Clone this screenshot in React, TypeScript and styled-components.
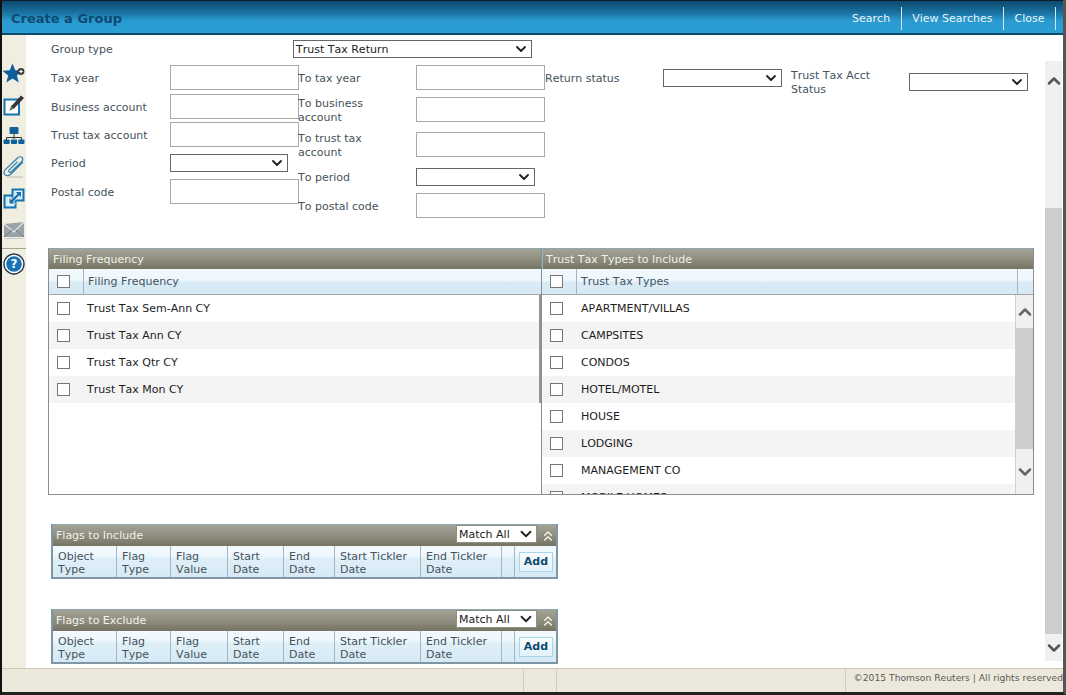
import React from 'react';
import styled, { createGlobalStyle } from 'styled-components';
import { ChevronDown, ChevronUp, ChevronsUp } from 'lucide-react';

const GlobalStyle = createGlobalStyle`
  html, body { margin: 0; padding: 0; background: #fff; }
  body { font-family: "DejaVu Sans", Verdana, sans-serif; font-size: 11px; font-kerning: none; }
  * { box-sizing: border-box; }
`;

const Page = styled.div`
  width: 1066px;
  height: 695px;
  display: flex;
  flex-direction: column;
  overflow: hidden;
  border-left: 2px solid #111;
  border-right: 3px solid #555;
  border-bottom: 3px solid #222;
  background: #fff;
`;

const Header = styled.header`
  height: 35px;
  flex: none;
  display: flex;
  align-items: center;
  padding: 2px 7px 0 9px;
  border-top: 1px solid #0b1c28;
  border-bottom: 2px solid #0d4a6c;
  background: linear-gradient(180deg, #0d4a6f 0%, #1a6f9f 35%, #2a9bd0 62%, #2a9fd4 100%);
`;

const Title = styled.h1`
  margin: 0;
  flex: 1;
  font-size: 13px;
  font-weight: bold;
  color: #0d4a73;
`;

const HeaderLink = styled.a`
  height: 23px;
  display: flex;
  align-items: center;
  padding: 0 10.5px;
  color: #e6f4fb;
  font-size: 11px;
  border-right: 1px solid #cfe8f4;
`;

const Body = styled.div`
  flex: 1;
  min-height: 0;
  display: flex;
`;

const Sidebar = styled.nav`
  width: 24px;
  flex: none;
  display: flex;
  flex-direction: column;
  align-items: center;
  gap: 9px;
  padding-top: 28px;
  background: #efeee0;
`;

const SideDivider = styled.div`
  width: 24px;
  height: 1px;
  margin: -1px 0 -5px;
  background: #a5a595;
`;

const Main = styled.main`
  flex: 1;
  min-width: 0;
  overflow: hidden;
  padding: 4px 0 0 22px;
`;

const GroupRow = styled.div`
  display: flex;
  align-items: center;
  height: 19px;
  padding-left: 3px;
  color: #44535c;
`;

const FormGrid = styled.div`
  display: grid;
  grid-template-columns: 247px 247px 246px 1fr;
  height: 183px;
  margin-top: 7px;
  padding-left: 3px;
`;

const FormColumn = styled.div`
  display: flex;
  flex-direction: column;
`;

const Field = styled.div<{ $top?: number }>`
  display: flex;
  align-items: center;
  margin-top: ${(p) => p.$top ?? 0}px;
`;

const Label = styled.label<{ $width: number }>`
  width: ${(p) => p.$width}px;
  flex: none;
  padding-top: 1px;
  margin-bottom: -1px;
  color: #44535c;
  line-height: 13.5px;
`;

const TextInput = styled.input`
  width: 129px;
  height: 25px;
  flex: none;
  border: 1px solid #a9a9a9;
  background: #fff;
  outline: none;
`;

const SelectBox = styled.div<{ $width: number }>`
  width: ${(p) => p.$width}px;
  height: 18px;
  flex: none;
  display: flex;
  align-items: center;
  justify-content: space-between;
  padding: 1px 2px 0 2px;
  border: 1px solid #666;
  background: #fff;
  color: #222;
  svg { flex: none; margin-top: -1px; }
`;

const TablesRow = styled.section`
  display: flex;
  width: 986px;
  height: 247px;
  border-left: 1px solid #8c8c8c;
  border-right: 1px solid #8c8c8c;
  border-bottom: 1px solid #8c8c8c;
`;

const Panel = styled.div<{ $side: 'left' | 'right' }>`
  width: 492px;
  flex: none;
  display: flex;
  flex-direction: column;
  border-left: ${(p) => (p.$side === 'right' ? '1px solid #8c8c8c' : 'none')};
`;

const BarTitle = styled.div<{ $accent?: boolean }>`
  height: 21px;
  flex: none;
  display: flex;
  align-items: center;
  padding-left: 4px;
  border-top: 1px solid #8ea7b3;
  background: linear-gradient(180deg, #a3a396 0%, #8f8e7f 50%, #757464 100%);
  color: #f1f1e8;
  font-size: 11px;
  ${(p) => (p.$accent ? 'box-shadow: inset 1px 0 0 #8fb4cc;' : '')}
`;

const ColumnHead = styled.div`
  height: 26px;
  flex: none;
  display: flex;
  align-items: center;
  border-bottom: 1px solid #a5a5a5;
  background: linear-gradient(180deg, #f1f9fd 0%, #eef7fc 45%, #d8eaf5 55%, #d6e9f4 100%);
  color: #44535c;
`;

const HeadCheckCell = styled.div`
  width: 35px;
  height: 25px;
  flex: none;
  display: flex;
  align-items: center;
  padding-left: 8px;
  border-right: 1px solid #9fb7c6;
`;

const HeadLabel = styled.div<{ $end?: boolean }>`
  height: 25px;
  display: flex;
  align-items: center;
  padding-left: 4px;
  ${(p) => (p.$end ? 'width: 441px; border-right: 1px solid #9fb7c6;' : '')}
`;

const Check = styled.input.attrs({ type: 'checkbox' })`
  appearance: none;
  width: 13px;
  height: 13px;
  margin: 0;
  flex: none;
  border: 1px solid #777;
  background: #fff;
`;

const ListArea = styled.div`
  flex: 1;
  min-height: 0;
  display: flex;
  overflow: hidden;
`;

const ListRows = styled.div`
  flex: 1;
  min-width: 0;
  overflow: hidden;
`;

const ListRow = styled.div<{ $odd: boolean; $edge?: boolean }>`
  height: 27px;
  display: flex;
  align-items: center;
  gap: ${(p) => (p.$edge ? 17 : 18)}px;
  padding-left: 8px;
  background: ${(p) => (p.$odd ? '#f4f4f4' : '#fff')};
  color: #1c1c1c;
  ${(p) => (p.$edge ? 'border-right: 2px solid #8f9599;' : '')}
`;

const InnerScroll = styled.div`
  width: 18px;
  flex: none;
  display: flex;
  flex-direction: column;
  align-items: center;
  border-left: 1px solid #d0d0d0;
  background: #f0f0f0;
  color: #666;
`;

const ScrollArrow = styled.div<{ $height: number }>`
  height: ${(p) => p.$height}px;
  width: 100%;
  flex: none;
  display: flex;
  align-items: center;
  justify-content: center;
  svg { flex: none; }
`;

const ScrollThumb = styled.div<{ $height: number }>`
  width: 100%;
  height: ${(p) => p.$height}px;
  flex: none;
  background: #cdcdcd;
`;

const FlagPanel = styled.section<{ $top: number }>`
  width: 507px;
  margin: ${(p) => p.$top}px 0 0 3px;
  border-left: 2px solid #7f96a4;
  border-right: 2px solid #7f96a4;
  border-bottom: 2px solid #7f96a4;
`;

const FlagBar = styled(BarTitle)`
  height: 22px;
  justify-content: space-between;
  padding: 0 0 0 3px;
  font-size: 11px;
  color: #f1f1e8;
  svg { color: #f4f4ec; }
`;

const FlagTools = styled.div`
  display: flex;
  align-items: center;
  gap: 3px;
`;

const MatchSelect = styled(SelectBox)`
  border-color: #8f8e7f;
  padding: 0 1px 0 2px;
  margin-top: -3px;
  color: #222;
`;

const FlagColumns = styled.div`
  display: grid;
  grid-template-columns: 64px 54px 57px 56px 51px 86px 81px 13px 1fr;
  height: 31px;
  background: linear-gradient(180deg, #f3fafe 0%, #eef7fc 30%, #dfeff8 40%, #d6e9f4 100%);
  color: #44535c;
`;

const FlagHead = styled.div`
  display: flex;
  align-items: center;
  padding: 2px 5px 0;
  line-height: 13px;
  border-right: 1px solid #9fb7c6;
`;

const AddCell = styled.div`
  display: flex;
  align-items: center;
  justify-content: center;
  padding-left: 1px;
`;

const AddButton = styled.button`
  width: 34px;
  height: 20px;
  padding: 0;
  border: 1px solid #a8d4ec;
  background: linear-gradient(180deg, #fbfdff, #e3f1f9);
  color: #0d4a6f;
  font: bold 11px "DejaVu Sans", Verdana, sans-serif;
`;

const PageScroll = styled.aside`
  width: 17px;
  flex: none;
  display: flex;
  flex-direction: column;
  margin: 26px 1px 7px 0;
  background: #f0f0f0;
  color: #555;
`;

const Footer = styled.footer`
  height: 24px;
  flex: none;
  display: flex;
  justify-content: flex-end;
  border-top: 1px solid #c9c8b8;
  background: #ece9dc;
`;

const FooterCell = styled.div<{ $width: number }>`
  width: ${(p) => p.$width}px;
  display: flex;
  align-items: center;
  justify-content: flex-end;
  padding-bottom: 6px;
  border-left: 1px solid #cfcdbd;
  color: #5a5a55;
  font-size: 9.2px;
  white-space: nowrap;
  overflow: hidden;
`;

const StarIcon = () => (
  <svg width="22" height="22" viewBox="0 0 22 22">
    <path d="M9.5.5l2.8 6.8 7.2.5-5.6 4.6 1.900 7.100-6.300-3.900-6.200 3.900 1.900-7.100L-.5 7.800l7.200-.5z" fill="#0f5f9c" />
    <circle cx="18" cy="8.500" r="3.400" fill="#3a3a3a" />
    <path d="M16.200 8.500h3.600M18 6.700v3.600" stroke="#fff" strokeWidth="1.200" />
  </svg>
);

const EditIcon = () => (
  <svg width="22" height="22" viewBox="0 0 22 22">
    <rect x="1.500" y="5.500" width="14.500" height="15" fill="#fff" stroke="#1573b0" strokeWidth="2" />
    <path d="M6.500 16.500l1.500-4L18 1.500l3 2.500L11 14.500z" fill="#333" />
    <path d="M6.500 16.500l1.500-4 3 2z" fill="#777" />
  </svg>
);

const OrgIcon = () => (
  <svg width="22" height="22" viewBox="0 0 22 22">
    <rect x="6.500" y="2" width="9" height="7" rx="1" fill="#11609a" />
    <path d="M11 9v5M3.500 15v-2.500h15V15" fill="none" stroke="#333" strokeWidth="1" />
    <rect x="0.500" y="14.500" width="6.200" height="4.500" rx="1" fill="#11609a" />
    <rect x="7.900" y="14.500" width="6.200" height="4.500" rx="1" fill="#11609a" />
    <rect x="15.300" y="14.500" width="6.200" height="4.500" rx="1" fill="#11609a" />
  </svg>
);

const ClipIcon = () => (
  <svg width="22" height="22" viewBox="0 0 22 22">
    <path
      d="M20 6L8 18c-2 2-5 2-6.200.7C.6 17.300 1 15 2.800 13.200L14.500 2c1.500-1.500 3.600-1.600 4.600-.5 1.100 1.100.8 3-.7 4.500L8.500 15.500c-.9.9-2 1-2.500.4-.5-.6-.3-1.500.5-2.300l8-7.800"
      fill="none"
      stroke="#2f80b5"
      strokeWidth="1.200"
    />
    <path d="M4 21h16" stroke="#bbb" strokeWidth="1" />
  </svg>
);

const LinkIcon = () => (
  <svg width="22" height="22" viewBox="0 0 22 22">
    <rect x="1.500" y="8.500" width="11" height="12" fill="#d7e8f3" stroke="#1573b0" strokeWidth="2" />
    <rect x="9.500" y="2.500" width="11" height="11" fill="#d7e8f3" stroke="#1573b0" strokeWidth="2" />
    <path d="M12 4.500h6.500V11L16 8.700 10.500 15l2 2H6v-6.500l2 2L14 7z" fill="#1573b0" stroke="#fff" strokeWidth=".8" />
  </svg>
);

const MailIcon = () => (
  <svg width="22" height="22" viewBox="0 0 22 22">
    <path d="M1 6l20-2v15H1z" fill="#9aa3a8" />
    <path d="M1 6l10 8 10-10" fill="none" stroke="#e6e9ea" strokeWidth="1.200" />
    <path d="M1 19l8-7M21 19l-8-7" stroke="#6e777c" strokeWidth="1" />
    <path d="M2 20.500h18" stroke="#ccc" strokeWidth="1" />
  </svg>
);

const HelpIcon = () => (
  <svg width="22" height="22" viewBox="0 0 22 22">
    <circle cx="11" cy="11" r="10" fill="#fff" stroke="#234" strokeWidth="1.300" />
    <circle cx="11" cy="11" r="7.800" fill="#1773b3" />
    <text x="11" y="15" textAnchor="middle" fontSize="12" fontWeight="bold" fill="#fff" fontFamily="DejaVu Sans, sans-serif">?</text>
  </svg>
);

const Select = ({ width, value }: { width: number; value?: string }) => (
  <SelectBox $width={width}>
    <span>{value}</span>
    <ChevronDown size={16} strokeWidth={2.800} color="#222" />
  </SelectBox>
);

const frequencies = ['Trust Tax Sem-Ann CY', 'Trust Tax Ann CY', 'Trust Tax Qtr CY', 'Trust Tax Mon CY'];
const taxTypes = ['APARTMENT/VILLAS', 'CAMPSITES', 'CONDOS', 'HOTEL/MOTEL', 'HOUSE', 'LODGING', 'MANAGEMENT CO', 'MOBILE HOMES'];
const flagColumns = [
  ['Object', 'Type'],
  ['Flag', 'Type'],
  ['Flag', 'Value'],
  ['Start', 'Date'],
  ['End', 'Date'],
  ['Start Tickler', 'Date'],
  ['End Tickler', 'Date'],
];

const Flags = ({ title, top }: { title: string; top: number }) => (
  <FlagPanel $top={top}>
    <FlagBar>
      <span>{title}</span>
      <FlagTools>
        <MatchSelect $width={81}>
          <span>Match All</span>
          <ChevronDown size={18} strokeWidth={2.400} color="#222" />
        </MatchSelect>
        <ChevronsUp size={16} strokeWidth={2} />
      </FlagTools>
    </FlagBar>
    <FlagColumns>
      {flagColumns.map(([a, b], i) => (
        <FlagHead key={i}>
          <span>
            {a}
            <br />
            {b}
          </span>
        </FlagHead>
      ))}
      <FlagHead />
      <AddCell>
        <AddButton>Add</AddButton>
      </AddCell>
    </FlagColumns>
  </FlagPanel>
);

export default function App() {
  return (
    <>
      <GlobalStyle />
      <Page>
        <Header>
          <Title>Create a Group</Title>
          <HeaderLink>Search</HeaderLink>
          <HeaderLink>View Searches</HeaderLink>
          <HeaderLink>Close</HeaderLink>
        </Header>
        <Body>
          <Sidebar>
            <StarIcon />
            <EditIcon />
            <OrgIcon />
            <ClipIcon />
            <LinkIcon />
            <MailIcon />
            <SideDivider />
            <HelpIcon />
          </Sidebar>
          <Main>
            <GroupRow>
              <Label $width={242}>Group type</Label>
              <Select width={239} value="Trust Tax Return" />
            </GroupRow>
            <FormGrid>
              <FormColumn>
                <Field>
                  <Label $width={119}>Tax year</Label>
                  <TextInput />
                </Field>
                <Field $top={4}>
                  <Label $width={119}>Business account</Label>
                  <TextInput />
                </Field>
                <Field $top={3}>
                  <Label $width={119}>Trust tax account</Label>
                  <TextInput />
                </Field>
                <Field $top={7}>
                  <Label $width={119}>Period</Label>
                  <Select width={118} />
                </Field>
                <Field $top={7}>
                  <Label $width={119}>Postal code</Label>
                  <TextInput />
                </Field>
              </FormColumn>
              <FormColumn>
                <Field>
                  <Label $width={118}>To tax year</Label>
                  <TextInput />
                </Field>
                <Field $top={6}>
                  <Label $width={118}>
                    To business
                    <br />
                    account
                  </Label>
                  <TextInput />
                </Field>
                <Field $top={8}>
                  <Label $width={118}>
                    To trust tax
                    <br />
                    account
                  </Label>
                  <TextInput />
                </Field>
                <Field $top={10}>
                  <Label $width={118}>To period</Label>
                  <Select width={119} />
                </Field>
                <Field $top={7}>
                  <Label $width={118}>To postal code</Label>
                  <TextInput />
                </Field>
              </FormColumn>
              <FormColumn>
                <Field $top={4}>
                  <Label $width={118}>Return status</Label>
                  <Select width={119} />
                </Field>
              </FormColumn>
              <FormColumn>
                <Field $top={3}>
                  <Label $width={118}>
                    Trust Tax Acct
                    <br />
                    Status
                  </Label>
                  <Select width={119} />
                </Field>
              </FormColumn>
            </FormGrid>

            <TablesRow>
              <Panel $side="left">
                <BarTitle>Filing Frequency</BarTitle>
                <ColumnHead>
                  <HeadCheckCell>
                    <Check />
                  </HeadCheckCell>
                  <HeadLabel>Filing Frequency</HeadLabel>
                </ColumnHead>
                <ListRows>
                  {frequencies.map((f, i) => (
                    <ListRow key={f} $odd={i % 2 === 1} $edge>
                      <Check />
                      {f}
                    </ListRow>
                  ))}
                </ListRows>
              </Panel>
              <Panel $side="right">
                <BarTitle $accent>Trust Tax Types to Include</BarTitle>
                <ColumnHead>
                  <HeadCheckCell>
                    <Check />
                  </HeadCheckCell>
                  <HeadLabel $end>Trust Tax Types</HeadLabel>
                </ColumnHead>
                <ListArea>
                  <ListRows>
                    {taxTypes.map((t, i) => (
                      <ListRow key={t} $odd={i % 2 === 1}>
                        <Check />
                        {t}
                      </ListRow>
                    ))}
                  </ListRows>
                  <InnerScroll>
                    <ScrollArrow $height={33}>
                      <ChevronUp size={20} strokeWidth={3} />
                    </ScrollArrow>
                    <ScrollThumb $height={121} />
                    <ScrollArrow $height={45}>
                      <ChevronDown size={20} strokeWidth={3} />
                    </ScrollArrow>
                  </InnerScroll>
                </ListArea>
              </Panel>
            </TablesRow>

            <Flags title="Flags to Include" top={29} />
            <Flags title="Flags to Exclude" top={30} />
          </Main>
          <PageScroll>
            <ScrollArrow $height={40}>
              <ChevronUp size={20} strokeWidth={3} />
            </ScrollArrow>
            <ScrollArrow $height={107} />
            <ScrollThumb $height={426} />
            <ScrollArrow $height={27}>
              <ChevronDown size={20} strokeWidth={3} />
            </ScrollArrow>
          </PageScroll>
        </Body>
        <Footer>
          <FooterCell $width={33} />
          <FooterCell $width={289} />
          <FooterCell $width={218}>©2015 Thomson Reuters | All rights reserved</FooterCell>
        </Footer>
      </Page>
    </>
  );
}
